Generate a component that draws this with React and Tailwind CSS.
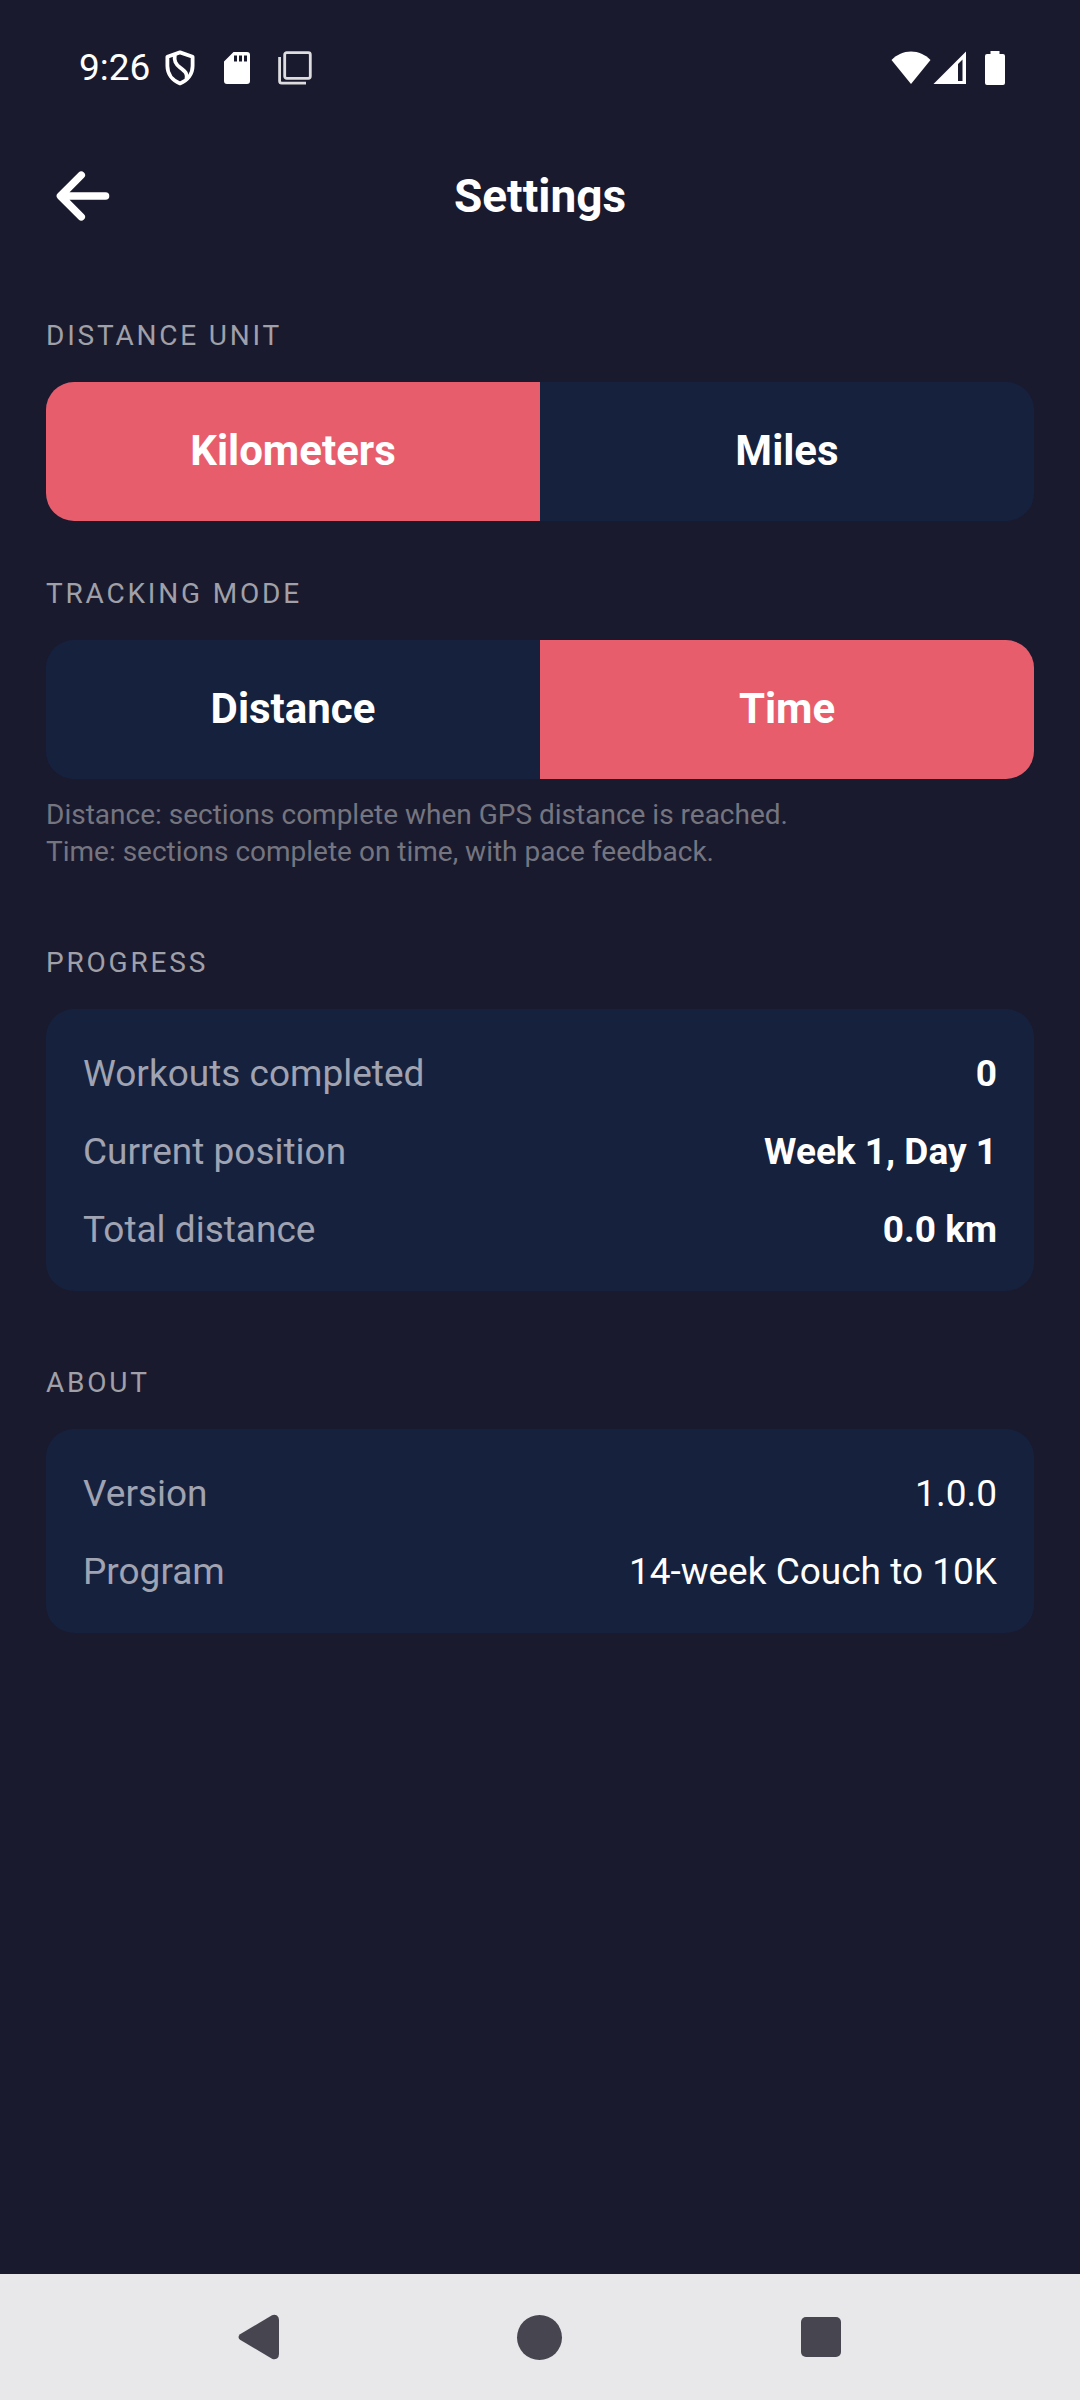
import React, { useState } from "react";

function StatusBar() {
  return (
    <div className="flex h-[136px] items-center justify-between pl-[79px] pr-[75px] text-white">
      <div className="flex items-center">
        <span className="text-[37px] leading-[44px]">9:26</span>
        <svg className="ml-[15px] h-9 w-[30px]" viewBox="0 0 30 36" fill="none" stroke="currentColor" strokeWidth="3.8" strokeLinejoin="round">
          <path d="M15 2.4 L27.6 6.8 V16 C27.6 24 22.5 30.5 15 33.4 C7.5 30.5 2.4 24 2.4 16 V6.8 Z" />
          <path d="M9.8 4.500 C9 11 10.500 14 15 17.500 C21 22 22.500 24 21.500 29" />
        </svg>
        <svg className="ml-[29px] h-8 w-[26px]" viewBox="0 0 26 32" fill="currentColor">
          <path
            fillRule="evenodd"
            d="M9.5 0 H23 a3 3 0 0 1 3 3 V29 a3 3 0 0 1 -3 3 H3 a3 3 0 0 1 -3 -3 V9.5 Z M10 3.5 V9.5 H13 V3.5 Z M15 3.5 V9.5 H18 V3.5 Z M20 3.5 V9.5 H23 V3.5 Z"
          />
        </svg>
        <svg className="ml-7 h-[34px] w-[34px] text-[#dddde0]" viewBox="0 0 34 34" fill="none" stroke="currentColor" strokeWidth="2.8">
          <rect x="6.7" y="1.7" width="25.6" height="25.6" rx="2" />
          <path d="M1.6 6 V30 a2.2 2.2 0 0 0 2.2 2.2 H28" />
        </svg>
      </div>
      <div className="flex items-center">
        <svg className="h-[34px] w-10" viewBox="0 0 40 34" fill="currentColor">
          <path d="M20 33 L0.5 9 C6 3.5 12.500 0.500 20 0.500 C27.500 0.500 34 3.500 39.500 9 Z" />
        </svg>
        <svg className="ml-[2px] h-[34px] w-[34px]" viewBox="0 0 34 34" fill="currentColor">
          <path fillRule="evenodd" d="M0.500 33 L33 0.500 V33 Z M25 13 V30 H29.500 V8.500 Z" />
        </svg>
        <svg className="ml-[18px] h-[34px] w-5" viewBox="0 0 20 34" fill="currentColor">
          <path d="M5.500 0 H14.500 V3 H18 a2 2 0 0 1 2 2 V32 a2 2 0 0 1 -2 2 H2 a2 2 0 0 1 -2 -2 V5 a2 2 0 0 1 2 -2 H5.500 Z" />
        </svg>
      </div>
    </div>
  );
}

function Header() {
  return (
    <header className="grid h-[120px] grid-cols-[1fr_auto_1fr] items-center px-[46px]">
      <button type="button" aria-label="Back" className="h-[74px] w-[74px] text-white">
        <svg
          className="h-full w-full"
          viewBox="0 0 512 512"
          fill="none"
          stroke="currentColor"
          strokeWidth="52"
          strokeLinecap="round"
          strokeLinejoin="round"
        >
          <path d="M244 400 L100 256 L244 112 M120 256 H412" />
        </svg>
      </button>
      <h1 className="text-[46px] leading-[54px] font-bold text-white">Settings</h1>
    </header>
  );
}

function SectionLabel({ children }) {
  return (
    <h2 className="mb-[26px] text-[28px] leading-10 tracking-widest text-[#a0a0a8] uppercase">{children}</h2>
  );
}

function Segmented({ label, options, value, onChange }) {
  return (
    <div role="group" aria-label={label} className="flex h-[139px] overflow-hidden rounded-[28px] bg-[#16213e]">
      {options.map((option) => (
        <button
          key={option}
          type="button"
          aria-pressed={option === value}
          onClick={() => onChange(option)}
          className={`flex-1 pb-[2px] text-[42px] leading-[50px] font-bold text-white ${
            option === value ? "bg-[#e85d6c]" : "bg-[#16213e]"
          }`}
        >
          {option}
        </button>
      ))}
    </div>
  );
}

function InfoCard({ rows, bold }) {
  return (
    <dl className="rounded-[28px] bg-[#16213e] px-[37px] pt-[26px] pb-[22px]">
      {rows.map(([name, value]) => (
        <div key={name} className="flex h-[78px] items-center justify-between text-[37px] leading-[44px]">
          <dt className="text-[#a0a3b1]">{name}</dt>
          <dd className={bold ? "font-bold text-white" : "text-white"}>{value}</dd>
        </div>
      ))}
    </dl>
  );
}

function NavBar() {
  return (
    <nav className="flex h-[126px] bg-[#e8e8ea] px-[118px] text-[#474650]">
      <button type="button" aria-label="Back" className="flex flex-1 items-center justify-center">
        <svg className="h-[46px] w-[42px]" viewBox="0 0 42 46" fill="currentColor">
          <path d="M2 20.200 L34 1.200 Q36.500 0 39 1.500 Q41 3 41 6 V40 Q41 43 39 44.500 Q36.500 46 34 44.800 L2 25.800 Q-1 23 2 20.200 Z" />
        </svg>
      </button>
      <button type="button" aria-label="Home" className="flex flex-1 items-center justify-center">
        <span className="h-[45px] w-[45px] rounded-full bg-[#474650]" />
      </button>
      <button type="button" aria-label="Recent apps" className="flex flex-1 items-center justify-center">
        <span className="h-10 w-10 rounded-[5px] bg-[#474650]" />
      </button>
    </nav>
  );
}

export default function App() {
  const [unit, setUnit] = useState("Kilometers");
  const [mode, setMode] = useState("Time");

  return (
    <div className="flex min-h-screen flex-col bg-[#1a1a2e] font-['Roboto',sans-serif]">
      <StatusBar />
      <Header />

      <main className="flex-1 px-[46px] pt-[60px]">
        <section>
          <SectionLabel>Distance unit</SectionLabel>
          <Segmented label="Distance unit" options={["Kilometers", "Miles"]} value={unit} onChange={setUnit} />
        </section>

        <section className="mt-[53px]">
          <SectionLabel>Tracking mode</SectionLabel>
          <Segmented label="Tracking mode" options={["Distance", "Time"]} value={mode} onChange={setMode} />
          <p className="mt-[17px] text-[28px] leading-[37px] text-[#757580]">
            Distance: sections complete when GPS distance is reached.
            <br />
            Time: sections complete on time, with pace feedback.
          </p>
        </section>

        <section className="mt-[73px]">
          <SectionLabel>Progress</SectionLabel>
          <InfoCard
            bold
            rows={[
              ["Workouts completed", "0"],
              ["Current position", "Week 1, Day 1"],
              ["Total distance", "0.0 km"],
            ]}
          />
        </section>

        <section className="mt-[72px]">
          <SectionLabel>About</SectionLabel>
          <InfoCard
            rows={[
              ["Version", "1.0.0"],
              ["Program", "14-week Couch to 10K"],
            ]}
          />
        </section>
      </main>

      <NavBar />
    </div>
  );
}
